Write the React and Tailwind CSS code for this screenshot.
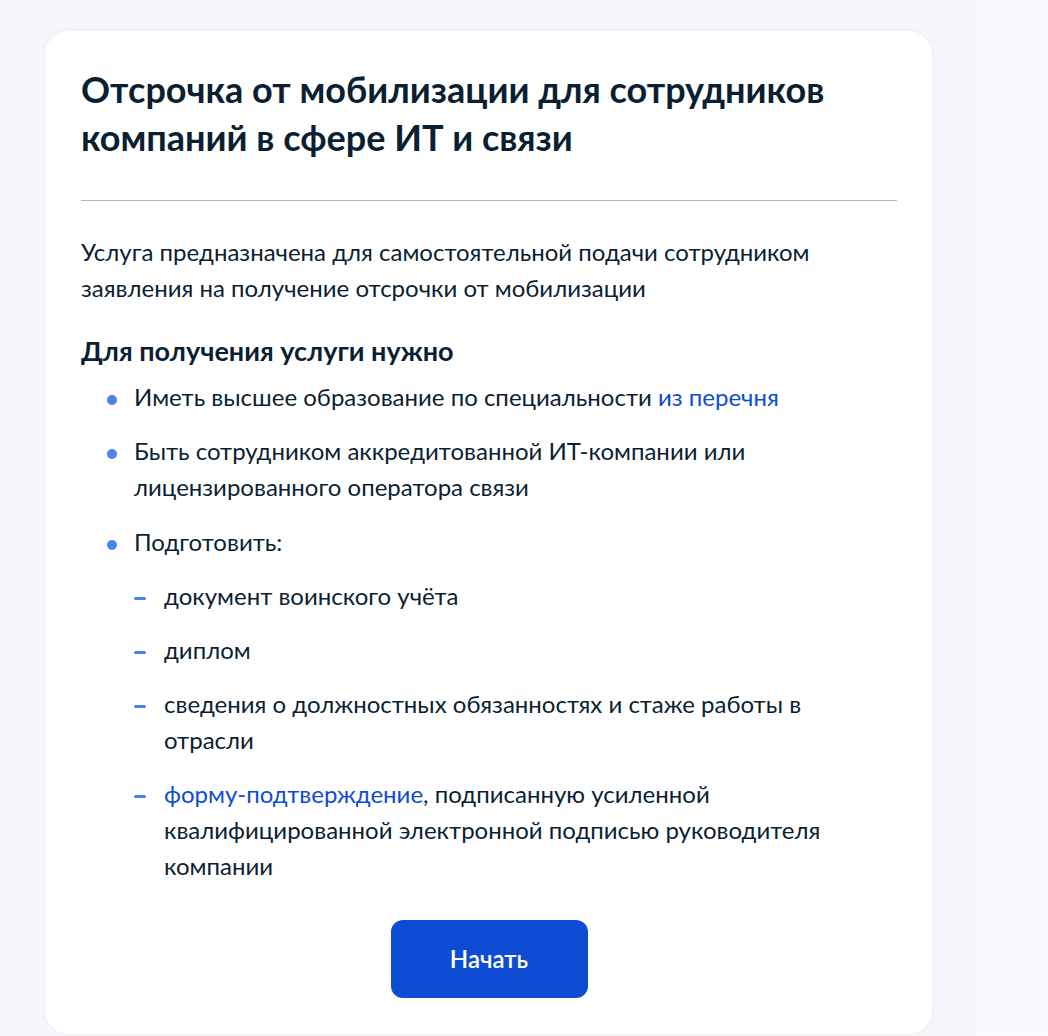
export default function App() {
  const font = { fontFamily: 'Lato, "Noto Sans", sans-serif' };
  const dot = (
    <span className="mt-[16px] mr-[17px] h-[10px] w-[10px] shrink-0 rounded-full bg-[#4b80f0]" />
  );
  return (
    <div className="min-h-[1036px] w-full bg-[#f5f7fa]" style={font}>
      <div className="flex">
        <div className="w-[975px] pl-[45px] pr-[43px] pt-[31px]">
          <div className="rounded-[24px] bg-white pl-[36px] pr-[35px] pt-[34px] pb-[36px] shadow-[0_0_8px_rgba(11,31,51,0.04)]">
            <h1 className="text-[36px] font-bold leading-[48px] text-[#0b1f33]">
              Отсрочка от мобилизации для сотрудников
              <br />
              компаний в сфере ИТ и связи
            </h1>
            <div className="mt-[39px] h-px bg-[#a8b9cf]" />
            <p className="mt-[33px] text-[24px] leading-[36px] text-[#0b1f33]">
              Услуга предназначена для самостоятельной подачи сотрудником
              <br />
              заявления на получение отсрочки от мобилизации
            </p>
            <h2 className="mt-[27px] text-[27px] font-bold leading-[36px] text-[#0b1f33]">
              Для получения услуги нужно
            </h2>
            <ul className="mt-[10px] flex flex-col gap-[18px] pl-[26px] text-[24px] leading-[36px] text-[#0b1f33]">
              <li className="flex">
                {dot}
                <span>
                  Иметь высшее образование по специальности{' '}
                  <a className="text-[#0d4cd3]">из перечня</a>
                </span>
              </li>
              <li className="flex">
                {dot}
                <span>
                  Быть сотрудником аккредитованной ИТ-компании или
                  <br />
                  лицензированного оператора связи
                </span>
              </li>
              <li className="mt-[1px] flex">
                {dot}
                <div className="flex flex-col">
                  <span>Подготовить:</span>
                  <ul className="mt-[18px] flex flex-col gap-[18px]">
                    {[
                      <>документ воинского учёта</>,
                      <>диплом</>,
                      <>
                        сведения о должностных обязанностях и стаже работы в
                        <br />
                        отрасли
                      </>,
                      <>
                        <a className="text-[#0d4cd3]">форму-подтверждение</a>, подписанную усиленной
                        <br />
                        квалифицированной электронной подписью руководителя
                        <br />
                        компании
                      </>,
                    ].map((c, i) => (
                      <li key={i} className="flex">
                        <span className="mt-[19px] mr-[18px] h-[3px] w-[12px] shrink-0 rounded-full bg-[#4b80f0]" />
                        <span className="whitespace-nowrap">{c}</span>
                      </li>
                    ))}
                  </ul>
                </div>
              </li>
            </ul>
            <div className="mt-[36px] flex justify-center">
              <button className="h-[78px] w-[197px] rounded-[12px] bg-[#0d4cd3] text-[24px] font-semibold text-white">
                Начать
              </button>
            </div>
          </div>
        </div>
        <div className="flex-1 bg-[#f8fafd]" />
      </div>
    </div>
  );
}
